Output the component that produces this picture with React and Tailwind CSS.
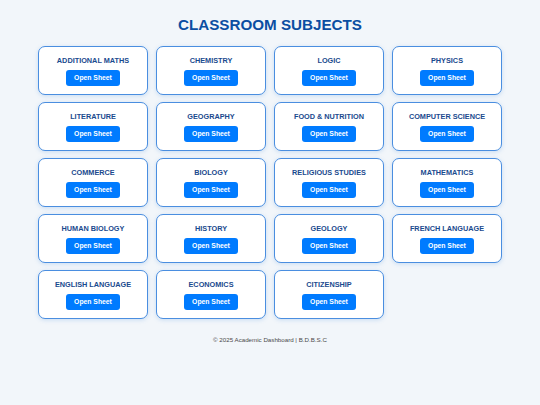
const subjects = [
  'ADDITIONAL MATHS',
  'CHEMISTRY',
  'LOGIC',
  'PHYSICS',
  'LITERATURE',
  'GEOGRAPHY',
  'FOOD & NUTRITION',
  'COMPUTER SCIENCE',
  'COMMERCE',
  'BIOLOGY',
  'RELIGIOUS STUDIES',
  'MATHEMATICS',
  'HUMAN BIOLOGY',
  'HISTORY',
  'GEOLOGY',
  'FRENCH LANGUAGE',
  'ENGLISH LANGUAGE',
  'ECONOMICS',
  'CITIZENSHIP',
];

export default function App() {
  return (
    <div className="min-h-[405px] w-[540px] bg-[#f2f6fa] font-['Liberation_Sans',Arial,sans-serif]">
      <h1 className="pt-[15px] text-center text-[15.2px] font-bold leading-[20px] text-[#0b4ea2]">
        CLASSROOM SUBJECTS
      </h1>
      <div className="mx-auto mt-[11px] grid w-[464px] grid-cols-4 gap-x-[8px] gap-y-[7px]">
        {subjects.map((s) => (
          <div
            key={s}
            className="flex h-[49px] flex-col items-center rounded-[7px] border-[1.3px] border-[#4a8ee0] bg-white pt-[9px] shadow-[0_1px_4px_rgba(74,142,224,0.25)]"
          >
            <div className="text-[7.3px] font-bold leading-[9px] text-[#1a4a8e]">{s}</div>
            <button className="mt-[5px] h-[16px] w-[54px] rounded-[3px] bg-[#007bff] text-[6.8px] font-bold leading-[16px] text-white">
              Open Sheet
            </button>
          </div>
        ))}
      </div>
      <div className="mt-[17px] text-center text-[6.2px] leading-[8px] text-[#4a4a4a]">
        © 2025 Academic Dashboard | B.D.B.S.C
      </div>
    </div>
  );
}
